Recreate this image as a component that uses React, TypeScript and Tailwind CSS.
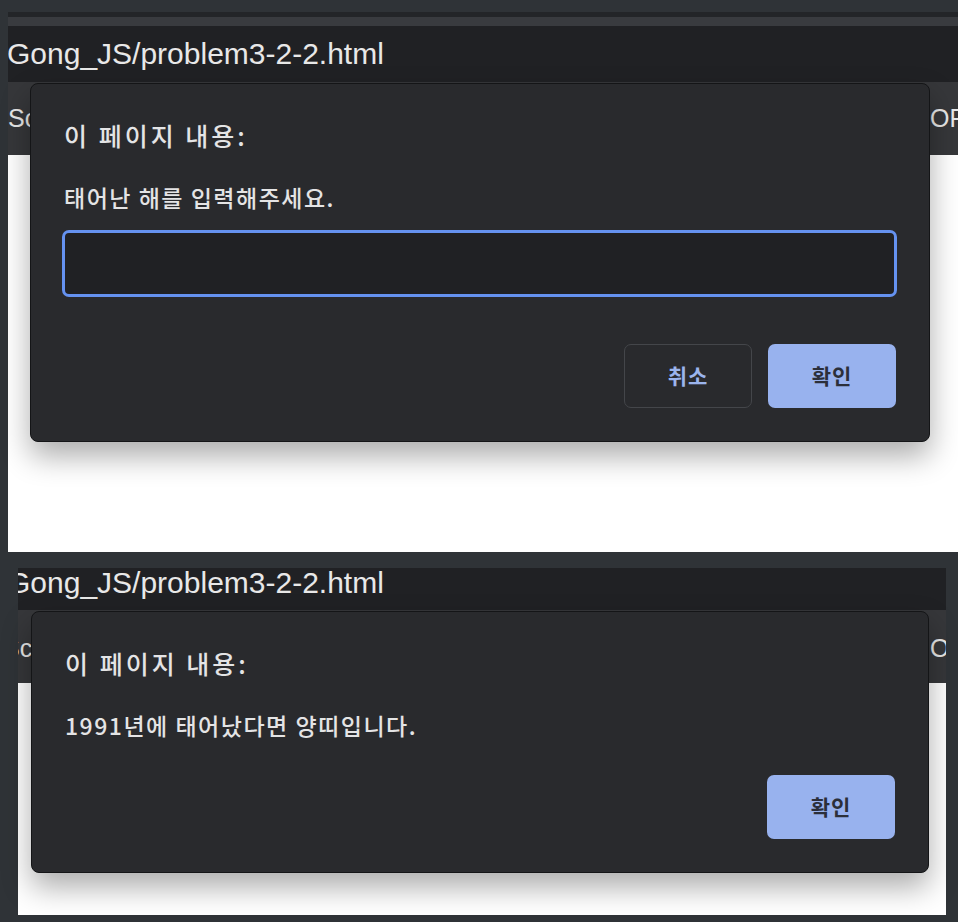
import React from "react";

const KR = '"Noto Sans CJK KR", "Noto Sans", sans-serif';
const LAT = '"Liberation Sans", Arial, sans-serif';

function Dialog({ message, withInput }: { message: string; withInput?: boolean }) {
  return (
    <div
      className="flex flex-col rounded-[8px] border border-[#141517] bg-[#292a2d] pl-[33px] pr-[33px] pb-[33px] pt-[37px] shadow-[0_14px_30px_rgba(0,0,0,0.33)]"
      style={{ fontFamily: KR }}
    >
      <div className="h-[28px] text-[25px] font-medium leading-[28px] tracking-[3px] text-[#e4e4e5]">이 페이지 내용:</div>
      <div className="mt-[36px] h-[24px] text-[23px] font-medium leading-[24px] tracking-[1.5px] text-[#e4e4e5]">{message}</div>
      {withInput ? (
        <>
          <div className="ml-[-2px] mt-[21px] h-[67px] w-[835px] rounded-[7px] border-[3px] border-[#6592f0] bg-[#202124]" />
          <div className="mt-[47px] flex justify-end gap-[16px]">
            <div className="flex h-[64px] w-[128px] items-center justify-center rounded-[7px] border border-[#44464a] text-[21px] font-bold tracking-[1px] text-[#9bb4ec]">
              취소
            </div>
            <div className="flex h-[64px] w-[128px] items-center justify-center rounded-[7px] bg-[#98b2ee] text-[21px] font-bold tracking-[1px] text-[#2b2f3a]">
              확인
            </div>
          </div>
        </>
      ) : (
        <div className="mt-[38px] flex justify-end">
          <div className="flex h-[64px] w-[128px] items-center justify-center rounded-[7px] bg-[#98b2ee] text-[21px] font-bold tracking-[1px] text-[#2b2f3a]">
            확인
          </div>
        </div>
      )}
    </div>
  );
}

export default function App() {
  return (
    <div className="h-[922px] w-[958px] overflow-hidden bg-[#2f3337]">
      {/* Top screenshot */}
      <div className="relative ml-[8px] flex h-[552px] flex-col pt-[12px]">
        <div className="h-[5px] bg-[#232528]" />
        <div className="h-[9px] bg-[#393b3f]" />
        <div className="flex h-[56px] items-center overflow-hidden bg-[#202124]">
          <span
            className="ml-[-1px] whitespace-nowrap text-[30px] leading-[34px] text-[#e8e8e8]"
            style={{ fontFamily: LAT }}
          >
            Gong_JS/problem3-2-2.html
          </span>
        </div>
        <div
          className="grid h-[73px] grid-cols-[922px_1fr] items-center overflow-hidden whitespace-nowrap bg-[#36373a] text-[25px] text-[#e8e8e8]"
          style={{ fontFamily: LAT }}
        >
          <span>Sc</span>
          <span>OR</span>
        </div>
        <div className="flex-1 bg-white" />
        <div className="absolute left-[22px] top-[83px] w-[900px]">
          <Dialog message="태어난 해를 입력해주세요." withInput />
        </div>
      </div>

      {/* Bottom screenshot */}
      <div className="relative ml-[18px] mt-[16px] flex h-[347px] w-[928px] flex-col">
        <div className="flex h-[42px] items-start overflow-hidden bg-[#202124]">
          <span
            className="ml-[-11px] mt-[-2px] whitespace-nowrap text-[30px] leading-[34px] text-[#e8e8e8]"
            style={{ fontFamily: LAT }}
          >
            Gong_JS/problem3-2-2.html
          </span>
        </div>
        <div
          className="grid h-[73px] grid-cols-[912px_1fr] items-start overflow-hidden whitespace-nowrap bg-[#36373a] pt-[20px] text-[25px] text-[#e8e8e8]"
          style={{ fontFamily: LAT }}
        >
          <span className="ml-[-15px]">Sc</span>
          <span>OR</span>
        </div>
        <div className="flex-1 bg-white" />
        <div className="absolute left-[13px] top-[43px] w-[898px]">
          <Dialog message="1991년에 태어났다면 양띠입니다." />
        </div>
      </div>
    </div>
  );
}
